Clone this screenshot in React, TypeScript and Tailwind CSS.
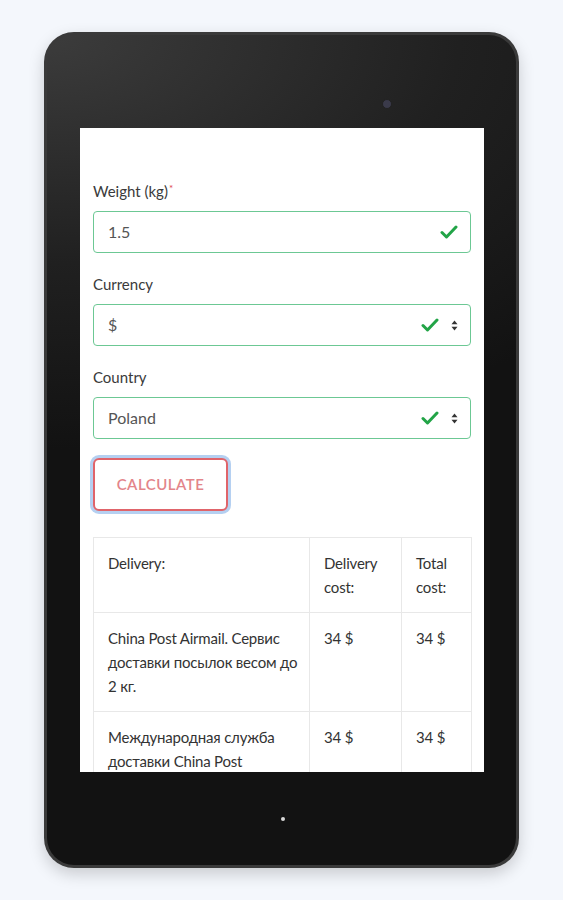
import React from "react";

const font = { fontFamily: "Lato, 'Noto Sans', sans-serif" };

function Check() {
  return (
    <svg width="18" height="14" viewBox="0 0 18 14" fill="none">
      <path d="M2 7.5 L6.5 12 L16 2" stroke="#22a447" strokeWidth="3" strokeLinecap="round" strokeLinejoin="round" />
    </svg>
  );
}

function Arrows() {
  return (
    <svg width="7" height="11" viewBox="0 0 7 11">
      <path d="M3.5 0.5 L6.5 4.2 L0.5 4.2 Z" fill="#333" />
      <path d="M3.5 10.5 L6.5 6.8 L0.5 6.8 Z" fill="#333" />
    </svg>
  );
}

function Field({ label, value, required, select }: { label: string; value: string; required?: boolean; select?: boolean }) {
  return (
    <div className="flex flex-col">
      <div className="text-[15px] leading-[20px] text-[#3a3a3a]">
        {label}
        {required && <sup className="text-[#e0434b] text-[10px] ml-[1px]">*</sup>}
      </div>
      <div className="mt-[10px] h-[42px] rounded-[4px] border border-[#6cc894] flex items-center pl-[14px] pr-[12px]">
        <span className="text-[16px] text-[#555] flex-1">{value}</span>
        {select ? (
          <div className="flex items-center gap-[12px]">
            <Check />
            <Arrows />
          </div>
        ) : (
          <Check />
        )}
      </div>
    </div>
  );
}

export default function App() {
  const cell = "border border-[#e8e8e8] pl-[14px] pr-[10px] py-[13px] align-top text-[15px] leading-[24px] tracking-[-0.2px] text-[#333] font-normal text-left";
  return (
    <div className="w-[563px] h-[900px] bg-[#f4f7fc] relative" style={font}>
      <div className="absolute left-[44px] top-[32px] w-[475px] h-[836px] rounded-[30px] bg-[#3a3a3a] p-[3px] shadow-[0_6px_16px_rgba(0,0,0,0.18)]">
        <div className="relative w-full h-full rounded-[27px] bg-[radial-gradient(160%_50%_at_0%_0%,#3c3c3c_0%,#202020_55%,#121212_100%)] pt-[93px] pl-[33px]">
          <div className="absolute left-[335px] top-[64px] w-[10px] h-[10px] rounded-full bg-[#3a3a4a] border border-[#222]" />
          <div className="absolute left-[234px] top-[782px] w-[4px] h-[4px] rounded-full bg-[#d8d8d8]" />
          <div className="w-[404px] h-[644px] bg-white overflow-hidden px-[13px] pt-[53px]">
            <div className="flex flex-col gap-[21px]">
              <Field label="Weight (kg)" value="1.5" required />
              <Field label="Currency" value="$" select />
              <Field label="Country" value="Poland" select />
            </div>
            <div className="mt-[19px]">
              <button className="w-[135px] h-[53px] rounded-[6px] border-2 border-[#e0646a] bg-white shadow-[0_0_0_3px_rgba(120,170,230,0.55)] text-[15px] font-semibold tracking-[0.5px] text-[#e3858a]">
                CALCULATE
              </button>
            </div>
            <table className="mt-[26px] w-[378px] border-collapse table-fixed">
              <colgroup>
                <col className="w-[216px]" />
                <col className="w-[92px]" />
                <col className="w-[70px]" />
              </colgroup>
              <thead>
                <tr className="h-[75px]">
                  <th className={cell}>Delivery:</th>
                  <th className={cell}>Delivery cost:</th>
                  <th className={cell}>Total cost:</th>
                </tr>
              </thead>
              <tbody>
                <tr>
                  <td className={cell}>China Post Airmail. Сервис доставки посылок весом до 2 кг.</td>
                  <td className={cell}>34 $</td>
                  <td className={cell}>34 $</td>
                </tr>
                <tr>
                  <td className={cell}>Международная служба доставки China Post</td>
                  <td className={cell}>34 $</td>
                  <td className={cell}>34 $</td>
                </tr>
              </tbody>
            </table>
          </div>
        </div>
      </div>
    </div>
  );
}
